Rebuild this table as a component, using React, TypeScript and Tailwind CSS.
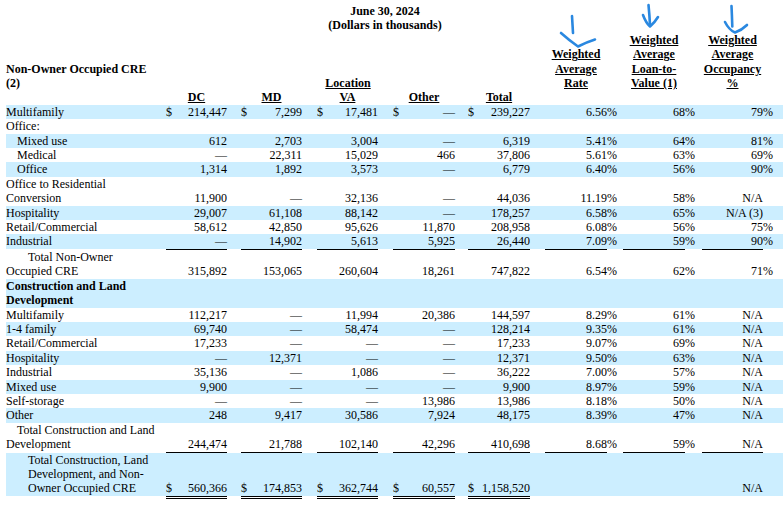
import type { ReactNode } from "react";

const COLS =
  "grid grid-cols-[160px_61px_14px_61px_15px_61px_15px_62px_13px_62px_15px_62px_9px_7px_62px_10px_7px_61px_10px]";

const D = "—";

type Row = {
  label: ReactNode;
  pad?: string;
  shade?: boolean;
  bold?: boolean;
  dollar?: boolean;
  // dc, md, va, other, total, rate, ltv, occupancy
  v?: string[];
};

type Item = Row | "rule" | "double";

const items: Item[] = [
  { label: "Multifamily", shade: true, dollar: true, v: ["214,447", "7,299", "17,481", D, "239,227", "6.56%", "68%", "79%"] },
  { label: "Office:" },
  { label: "Mixed use", pad: "pl-[11px]", shade: true, v: ["612", "2,703", "3,004", D, "6,319", "5.41%", "64%", "81%"] },
  { label: "Medical", pad: "pl-[11px]", v: [D, "22,311", "15,029", "466", "37,806", "5.61%", "63%", "69%"] },
  { label: "Office", pad: "pl-[11px]", shade: true, v: ["1,314", "1,892", "3,573", D, "6,779", "6.40%", "56%", "90%"] },
  {
    label: (
      <>
        Office to Residential
        <br />
        Conversion
      </>
    ),
    v: ["11,900", D, "32,136", D, "44,036", "11.19%", "58%", "N/A"],
  },
  { label: "Hospitality", shade: true, v: ["29,007", "61,108", "88,142", D, "178,257", "6.58%", "65%", "N/A (3)"] },
  { label: "Retail/Commercial", v: ["58,612", "42,850", "95,626", "11,870", "208,958", "6.08%", "56%", "75%"] },
  { label: "Industrial", shade: true, v: [D, "14,902", "5,613", "5,925", "26,440", "7.09%", "59%", "90%"] },
  "rule",
  {
    label: (
      <>
        Total Non-Owner
        <br />
        Occupied CRE
      </>
    ),
    pad: "indent-[22px]",
    v: ["315,892", "153,065", "260,604", "18,261", "747,822", "6.54%", "62%", "71%"],
  },
  {
    label: (
      <>
        Construction and Land
        <br />
        Development
      </>
    ),
    bold: true,
    shade: true,
  },
  { label: "Multifamily", v: ["112,217", D, "11,994", "20,386", "144,597", "8.29%", "61%", "N/A"] },
  { label: "1-4 family", shade: true, v: ["69,740", D, "58,474", D, "128,214", "9.35%", "61%", "N/A"] },
  { label: "Retail/Commercial", v: ["17,233", D, D, D, "17,233", "9.07%", "69%", "N/A"] },
  { label: "Hospitality", shade: true, v: [D, "12,371", D, D, "12,371", "9.50%", "63%", "N/A"] },
  { label: "Industrial", v: ["35,136", D, "1,086", D, "36,222", "7.00%", "57%", "N/A"] },
  { label: "Mixed use", shade: true, v: ["9,900", D, D, D, "9,900", "8.97%", "59%", "N/A"] },
  { label: "Self-storage", v: [D, D, D, "13,986", "13,986", "8.18%", "50%", "N/A"] },
  { label: "Other", shade: true, v: ["248", "9,417", "30,586", "7,924", "48,175", "8.39%", "47%", "N/A"] },
  {
    label: (
      <>
        Total Construction and Land
        <br />
        Development
      </>
    ),
    pad: "indent-[11px]",
    v: ["244,474", "21,788", "102,140", "42,296", "410,698", "8.68%", "59%", "N/A"],
  },
  "rule",
  {
    label: (
      <>
        Total Construction, Land
        <br />
        Development, and Non-
        <br />
        Owner Occupied CRE
      </>
    ),
    pad: "pl-[22px]",
    shade: true,
    dollar: true,
    v: ["560,366", "174,853", "362,744", "60,557", "1,158,520", "", "", "N/A"],
  },
  "double",
];

function Money({ value, dollar }: { value: string; dollar?: boolean }) {
  if (dollar) {
    return (
      <div className="flex justify-between whitespace-nowrap">
        <span>$</span>
        <span>{value}</span>
      </div>
    );
  }
  return <div className="text-right whitespace-nowrap">{value}</div>;
}

function pct(value: string) {
  const has = value.endsWith("%");
  return [
    <div className="text-right whitespace-nowrap">{has ? value.slice(0, -1) : value}</div>,
    <div className="whitespace-nowrap">{has ? "%" : ""}</div>,
  ];
}

function TableRow({ row }: { row: Row }) {
  const v = row.v ?? ["", "", "", "", "", "", "", ""];
  const [rate, ratePct] = pct(v[5]);
  const [ltv, ltvPct] = pct(v[6]);
  const [occ, occPct] = pct(v[7]);
  return (
    <div className={`${COLS} items-end ${row.shade ? "bg-[#cceeff]" : ""}`}>
      <div className={`${row.pad ?? ""} ${row.bold ? "font-bold" : ""}`}>{row.label}</div>
      <Money value={v[0]} dollar={row.dollar} />
      <div />
      <Money value={v[1]} dollar={row.dollar} />
      <div />
      <Money value={v[2]} dollar={row.dollar} />
      <div />
      <Money value={v[3]} dollar={row.dollar} />
      <div />
      <Money value={v[4]} dollar={row.dollar} />
      <div />
      {rate}
      {ratePct}
      <div />
      {ltv}
      {ltvPct}
      <div />
      {occ}
      {occPct}
    </div>
  );
}

function Rule({ double }: { double?: boolean }) {
  const marked = double ? [1, 3, 5, 7, 9] : [1, 3, 5, 7, 9, 11, 14, 17];
  return (
    <div className={`${COLS} ${double ? "h-[3px]" : "h-px"}`}>
      {Array.from({ length: 19 }).map((_, i) =>
        marked.includes(i) ? (
          <div key={i} className={double ? "border-y border-black" : "bg-black"} />
        ) : (
          <div key={i} />
        )
      )}
    </div>
  );
}

export default function App() {
  return (
    <div className="relative w-[783px] h-[511px] overflow-hidden bg-white pl-[6px] pt-[4px] text-[12px] leading-[14.4px] text-black font-['Liberation_Serif',serif]">
      {/* Title */}
      <div className="w-[758px] text-center font-bold">
        <div>June 30, 2024</div>
        <div>(Dollars in thousands)</div>
      </div>

      {/* Column headers */}
      <div className={`${COLS} h-[57.6px] items-end font-bold`}>
        <div>
          Non-Owner Occupied CRE
          <br />
          (2)
        </div>
        <div className="col-start-2 col-end-11 text-center">
          <span className="underline">Location</span>
        </div>
        <div className="col-start-12 text-center underline">
          Weighted
          <br />
          Average
          <br />
          Rate
        </div>
        <div className="col-start-15 text-center underline">
          Weighted
          <br />
          Average
          <br />
          Loan-to-
          <br />
          Value (1)
        </div>
        <div className="col-start-18 text-center underline">
          Weighted
          <br />
          Average
          <br />
          Occupancy
          <br />%
        </div>
      </div>
      <div className={`${COLS} font-bold`}>
        <div />
        <div className="text-center underline">DC</div>
        <div />
        <div className="text-center underline">MD</div>
        <div />
        <div className="text-center underline">VA</div>
        <div />
        <div className="text-center underline">Other</div>
        <div />
        <div className="text-center underline">Total</div>
      </div>

      {/* Body */}
      {items.map((it, i) =>
        it === "rule" ? (
          <Rule key={i} />
        ) : it === "double" ? (
          <Rule key={i} double />
        ) : (
          <TableRow key={i} row={it} />
        )
      )}

      {/* Hand-drawn arrows */}
      <svg
        className="absolute left-0 top-0 pointer-events-none"
        width="783"
        height="60"
        viewBox="0 0 783 60"
        fill="none"
        stroke="#2a88e0"
        strokeWidth="2.6"
        strokeLinecap="round"
        strokeLinejoin="round"
      >
        <path d="M572 16 Q572.5 25 573 33" />
        <path d="M561 33 Q570 41 578 46.5 Q587 42 595 39.5" />
        <path d="M648.5 5 Q649.5 15 650 25" />
        <path d="M643 15 Q646 23 650 26.5 Q655 22 658 17" />
        <path d="M731.5 6 Q732 16 732.3 26.5" />
        <path d="M725 22 Q729 30 735 32.5 Q742 30 747 25" />
      </svg>
    </div>
  );
}
